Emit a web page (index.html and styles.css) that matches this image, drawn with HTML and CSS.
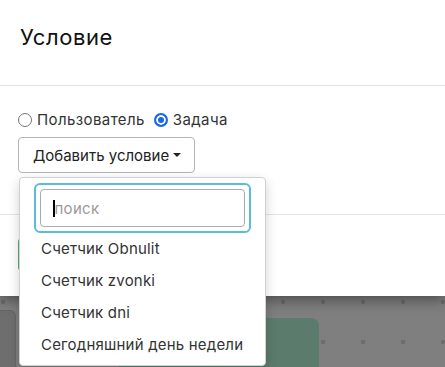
FILE: index.html
```html
<!DOCTYPE html>
<html lang="ru">
<head>
<meta charset="utf-8">
<title>Условие</title>
<link rel="stylesheet" href="styles.css">
</head>
<body>
<div class="page">
  <div class="modal">
    <div class="modal-header">
      <h2 class="modal-title">Условие</h2>
    </div>
    <div class="modal-body">
      <div class="radios">
        <label class="radio"><span class="radio-dot"></span>Пользователь</label>
        <label class="radio"><span class="radio-dot checked"></span>Задача</label>
      </div>
      <button class="add-btn">Добавить условие<span class="caret"></span></button>
    </div>
    <div class="modal-footer">
      <button class="save-btn" aria-label="Сохранить"></button>
    </div>
  </div>
  <div class="backdrop">
    <div class="card-grey"></div>
    <div class="card-green"></div>
  </div>
  <div class="dropdown">
    <div class="search-wrap">
      <div class="search"><span class="cursor"></span><span class="placeholder">поиск</span></div>
    </div>
    <ul class="items">
      <li>Счетчик Obnulit</li>
      <li>Счетчик zvonki</li>
      <li>Счетчик dni</li>
      <li>Сегодняшний день недели</li>
    </ul>
  </div>
</div>
</body>
</html>
```
FILE: styles.css
```css
* { box-sizing: border-box; }
html, body { margin: 0; padding: 0; }
body {
  font-family: Inter, "Noto Sans", sans-serif;
  color: #222;
  width: 445px;
  height: 367px;
  overflow: hidden;
  background: #7f7f7f;
}
.page { position: relative; width: 445px; height: 367px; overflow: hidden; }
.modal {
  background: #fff;
  height: 296px;
  position: relative;
  z-index: 2;
  box-shadow: 0 3px 14px rgba(0,0,0,0.45);
}
.modal-header {
  height: 86px;
  border-bottom: 1px solid #e3e3e3;
  padding: 24px 20px 0;
}
.modal-title {
  margin: 0;
  font-weight: 400;
  font-size: 22px;
  letter-spacing: 0.6px;
  line-height: 26px;
  color: #111;
}
.modal-body {
  height: 128px;
  padding: 24px 18px 0;
}
.radios { display: flex; gap: 9px; align-items: center; height: 19px; }
.radio { display: flex; align-items: center; gap: 5px; font-size: 15px; letter-spacing: 0.4px; color: #333; white-space: nowrap; }
.radio-dot {
  width: 14px; height: 14px; border-radius: 50%;
  border: 1px solid #767676; background: #fff;
}
.radio-dot.checked {
  border: 2px solid #1668e3;
  background: #1668e3;
  box-shadow: inset 0 0 0 2px #fff;
}
.add-btn {
  margin-top: 8px;
  height: 36px;
  padding: 0 13px 0 14px;
  font-family: inherit;
  font-size: 15px;
  letter-spacing: 0;
  white-space: nowrap;
  color: #222;
  background: #fff;
  border: 1px solid #b5b5b5;
  border-radius: 4px;
  display: flex;
  align-items: center;
  gap: 4px;
}
.caret {
  width: 0; height: 0;
  border-left: 4px solid transparent;
  border-right: 4px solid transparent;
  border-top: 4px solid #222;
}
.modal-footer {
  border-top: 1px solid #e3e3e3;
  padding: 23px 18px 0;
}
.save-btn {
  height: 33px; width: 120px;
  background: #4caf7d; color: #fff; border: 0; border-radius: 4px;
  font-family: inherit; font-size: 15px;
}
.backdrop {
  height: 71px;
  display: flex;
  align-items: flex-start;
  background-color: #7f7f7f;
  background-image: radial-gradient(circle, #6c6c6c 2px, transparent 2.5px);
  background-size: 40px 40px;
  background-position: -17px -14px;
}
.card-grey {
  width: 16px; height: 60px; margin-top: 14px;
  background: #6e6e6e;
  border: 1px solid #666;
  border-left: 0;
  border-radius: 0 6px 0 0;
}
.card-green {
  width: 200px; height: 60px; margin-top: 22px; margin-left: 103px;
  background: #5b7b6c;
  border-radius: 0 8px 0 0;
}
.dropdown {
  position: absolute;
  left: 19px; top: 177px;
  width: 247px; height: 189px;
  background: #fff;
  border: 1px solid #d0d0d0;
  border-radius: 4px;
  box-shadow: 0 4px 12px rgba(0,0,0,0.18);
  z-index: 5;
  padding: 5px 14px 0 14px;
}
.search-wrap {
  border: 2px solid #5bbbdc;
  border-radius: 6px;
  padding: 4px;
  height: 50px;
}
.search {
  height: 38px;
  border: 1px solid #aaa;
  border-radius: 4px;
  display: flex; align-items: center;
  padding-left: 12px;
  font-size: 15px;
  letter-spacing: 0.3px;
}
.cursor { width: 1.5px; height: 17px; background: #000; }
.placeholder { color: #9a9a9a; }
.items { list-style: none; margin: 0; padding: 0; }
.items li {
  font-size: 15px;
  letter-spacing: 0.2px;
  color: #333;
  height: 32px;
  line-height: 32px;
  padding-left: 7px;
  white-space: nowrap;
}
```
